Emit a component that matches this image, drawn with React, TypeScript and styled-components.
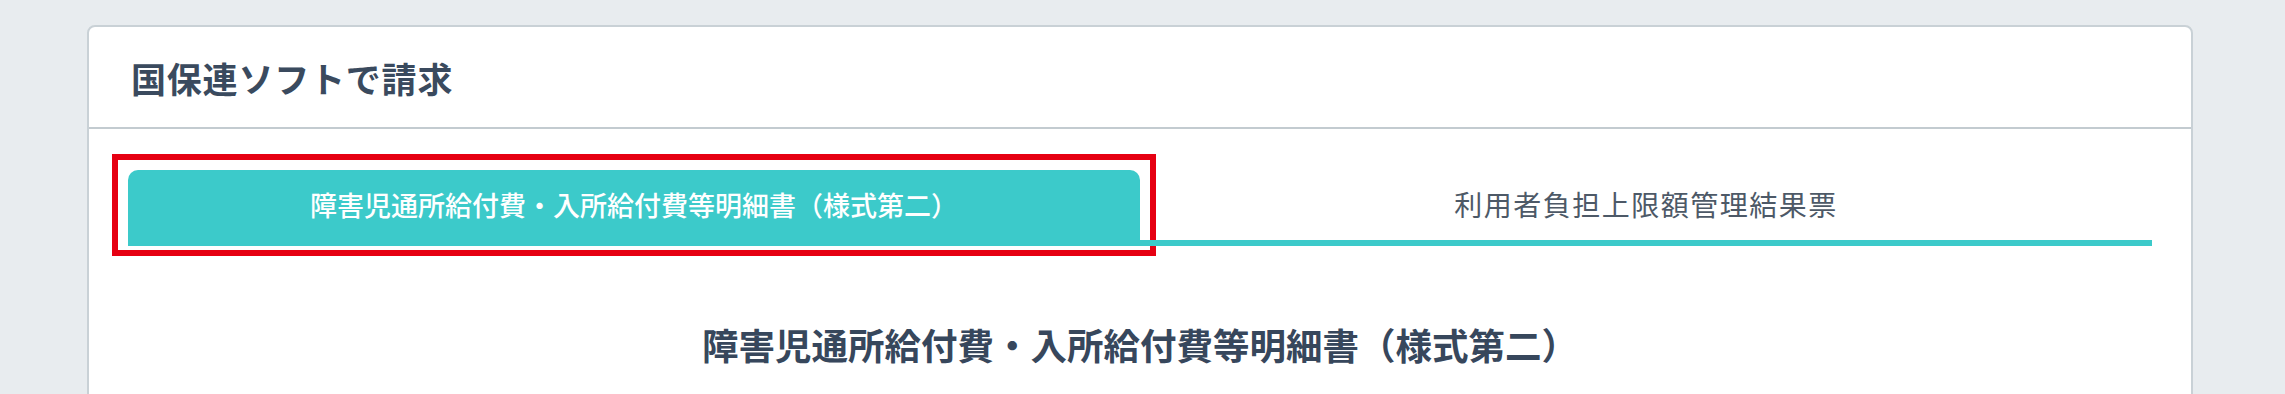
import styled, { createGlobalStyle } from "styled-components";

const GlobalStyle = createGlobalStyle`
  body {
    margin: 0;
    background: #e8ecef;
    font-family: "Noto Sans CJK JP", "Noto Sans", sans-serif;
  }
`;

const Page = styled.div`
  padding: 25px 92px 0 87px;
  min-height: 394px;
  box-sizing: border-box;
`;

const Card = styled.section`
  background: #ffffff;
  border: 2px solid #c9d1d6;
  border-radius: 8px;
  min-height: 420px;
`;

const CardHeader = styled.header`
  height: 100px;
  display: flex;
  align-items: center;
  padding: 0 42px;
  border-bottom: 2px solid #c3cbd0;
`;

const Title = styled.h1`
  margin: 0;
  font-size: 35px;
  font-weight: 700;
  color: #3a4a5e;
  letter-spacing: 0.8px;
`;

const CardBody = styled.div`
  padding: 41px 39px 0 39px;
`;

const TabList = styled.div`
  display: flex;
`;

const Tab = styled.button<{ $active?: boolean }>`
  position: relative;
  flex: 1;
  height: 76px;
  box-sizing: border-box;
  border: none;
  border-bottom: 6px solid #3ccaca;
  border-radius: ${({ $active }) => ($active ? "10px 10px 0 0" : "0")};
  background: ${({ $active }) => ($active ? "#3ccaca" : "transparent")};
  color: ${({ $active }) => ($active ? "#ffffff" : "#4d5967")};
  font-family: inherit;
  font-size: ${({ $active }) => ($active ? "27px" : "28px")};
  font-weight: ${({ $active }) => ($active ? 500 : 400)};
  letter-spacing: ${({ $active }) => ($active ? "0" : "1.5px")};
  padding: 0 0 2px;
  cursor: pointer;
`;

const Highlight = styled.span`
  position: absolute;
  inset: -16px;
  border: 6px solid #e60012;
  pointer-events: none;
`;

const SectionHeading = styled.h2`
  margin: 72px 0 0;
  text-align: center;
  font-size: 36.5px;
  line-height: 54px;
  font-weight: 700;
  color: #37475c;
`;

export default function App() {
  return (
    <>
      <GlobalStyle />
      <Page>
        <Card>
          <CardHeader>
            <Title>国保連ソフトで請求</Title>
          </CardHeader>
          <CardBody>
            <TabList>
              <Tab $active>
                障害児通所給付費・入所給付費等明細書（様式第二）
                <Highlight />
              </Tab>
              <Tab>利用者負担上限額管理結果票</Tab>
            </TabList>
            <SectionHeading>
              障害児通所給付費・入所給付費等明細書（様式第二）
            </SectionHeading>
          </CardBody>
        </Card>
      </Page>
    </>
  );
}
